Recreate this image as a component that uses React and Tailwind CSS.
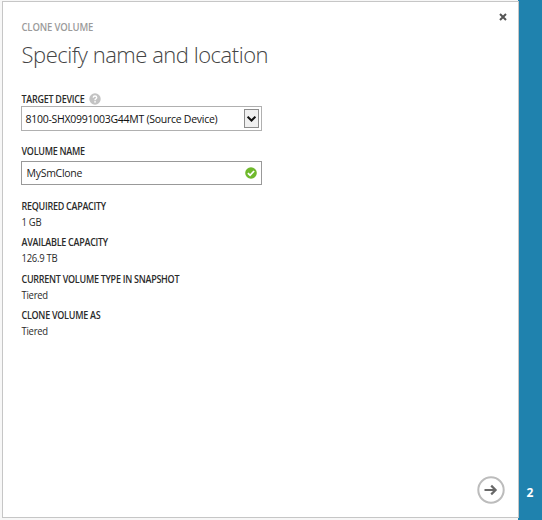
import React from "react";

const details = [
  { label: "REQUIRED CAPACITY", value: "1 GB", gap: "h-[36px]" },
  { label: "AVAILABLE CAPACITY", value: "126.9 TB", gap: "h-[37px]" },
  { label: "CURRENT VOLUME TYPE IN SNAPSHOT", value: "Tiered", gap: "h-[36px]" },
  { label: "CLONE VOLUME AS", value: "Tiered", gap: "h-[36px]" },
];

export default function App() {
  return (
    <div className="flex h-[520px] w-[542px] overflow-hidden bg-white font-['Open_Sans','Noto_Sans',sans-serif] text-[#2b2b2b]">
      <div className="w-[518px] shrink-0 bg-[#f7f7f7] pt-px pl-[2px] pb-[2px]">
        <main className="relative z-10 flex h-[517px] w-[517px] flex-col border border-[#c6c6c6] bg-white pl-[18px]">
          <header className="flex h-[62px] justify-between">
            <div className="pl-[0.5px] whitespace-nowrap">
              <div className="mt-[18px] h-[14px] origin-top scale-y-[1.12] text-[9.5px] leading-[14px] font-semibold tracking-[-0.15px] text-[#9b9b9b]">CLONE VOLUME</div>
              <h1 className="mt-[4px] text-[22px] leading-[32px] font-light tracking-[-0.48px] text-[#444]">Specify name and location</h1>
            </div>
            <button aria-label="Close" className="mt-[11px] mr-[11px] h-[8px] w-[8px]">
              <svg viewBox="0 0 8 8" className="h-[8px] w-[8px]" fill="none" stroke="#555" strokeWidth="2">
                <path d="M1 1L7 7M7 1L1 7" />
              </svg>
            </button>
          </header>

          <div className="mt-[28px] flex h-[14px] items-center gap-[5px] pl-[0.5px] text-[9px] leading-[14px] font-semibold tracking-[-0.27px] whitespace-nowrap">
            <span className="block origin-top scale-y-[1.12]">TARGET DEVICE</span>
            <svg viewBox="0 0 12 12" className="h-[12px] w-[12px]">
              <circle cx="6" cy="6" r="5.7" fill="#c3c3c3" />
              <path d="M4.2 4.6Q4.3 3 6 3Q7.7 3 7.7 4.4Q7.7 5.2 6.8 5.8Q6 6.3 6 7.2" fill="none" stroke="#fff" strokeWidth="1.4" />
              <rect x="5.3" y="8.1" width="1.5" height="1.5" fill="#fff" />
            </svg>
          </div>
          <div className="flex h-[25px] w-[241px] shrink-0 items-center justify-between border border-[#b0b0b0] pr-[2px] pl-[3.5px] text-[10.5px] tracking-[-0.27px] text-[#111]">
            <span className="block origin-top scale-y-[1.06] pt-px whitespace-nowrap">8100-SHX0991003G44MT (Source Device)</span>
            <span className="flex h-[19px] w-[15px] items-center justify-center border border-[#8c8c8c] bg-[#f0f0f0]">
              <svg viewBox="0 0 9 6" className="h-[6px] w-[9px]" fill="none" stroke="#111" strokeWidth="2">
                <path d="M0.6 0.7L4.5 4.5L8.4 0.7" />
              </svg>
            </span>
          </div>

          <div className="mt-[13px] h-[14px] pl-[0.5px] text-[9px] leading-[14px] font-semibold tracking-[-0.27px] whitespace-nowrap">
            <span className="block origin-top scale-y-[1.12]">VOLUME NAME</span>
          </div>
          <div className="mt-[3px] flex h-[24px] w-[241px] shrink-0 items-center justify-between border border-[#999] pr-[4.5px] pl-[4.5px] text-[10.5px] tracking-[-0.27px] text-[#222]">
            <span className="block scale-y-[1.06] pt-px">MySmClone</span>
            <svg viewBox="0 0 12 12" className="h-[12px] w-[12px]">
              <circle cx="6" cy="6" r="5.8" fill="#6fb92c" />
              <path d="M2.9 6.1L5.1 8.3L9.1 4" fill="none" stroke="#fff" strokeWidth="1.8" />
            </svg>
          </div>

          <dl className="mt-[14px] pl-[0.5px] whitespace-nowrap">
            {details.map((d) => (
              <div key={d.label} className={d.gap}>
                <dt className="h-[14px] origin-top scale-y-[1.12] text-[9px] leading-[14px] font-semibold tracking-[-0.27px]">{d.label}</dt>
                <dd className="mt-[2px] h-[14px] origin-top scale-y-[1.08] text-[9.5px] leading-[14px] tracking-[-0.27px]">{d.value}</dd>
              </div>
            ))}
          </dl>

          <footer className="mt-auto mr-[13px] mb-[13px] flex justify-end">
            <button aria-label="Next">
              <svg viewBox="0 0 28 28" className="block h-[28px] w-[28px]" fill="none">
                <circle cx="14" cy="14" r="12.7" stroke="#bcbcbc" strokeWidth="2" />
                <path d="M7.5 14H18.5M14.2 9.6L18.6 14L14.2 18.4" stroke="#686868" strokeWidth="2.2" />
              </svg>
            </button>
          </footer>
        </main>
      </div>
      <aside className="flex flex-1 items-end justify-center bg-[#1f82ae] pb-[19px] text-[12px] leading-[16px] font-bold text-white">
        2
      </aside>
    </div>
  );
}
